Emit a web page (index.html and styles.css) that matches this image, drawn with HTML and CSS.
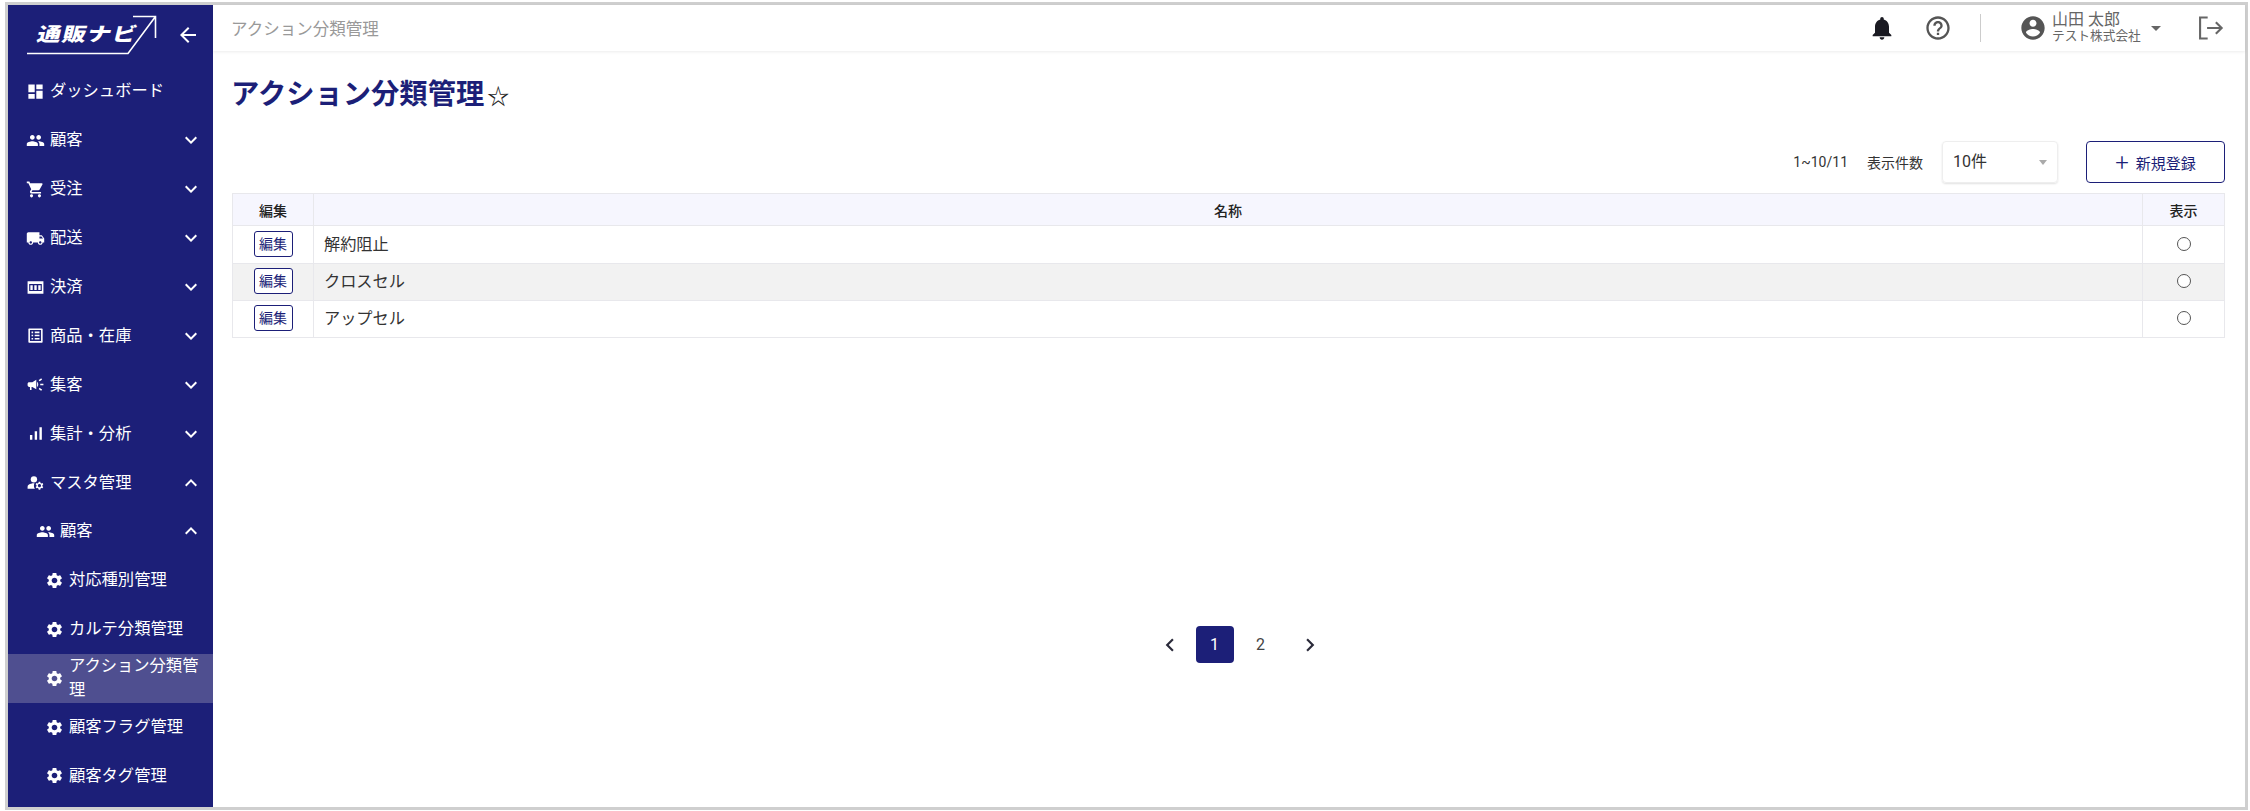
FILE: index.html
```html
<!DOCTYPE html>
<html lang="ja">
<head>
    <meta charset="UTF-8">
    <title>アクション分類管理</title>
    <link rel="stylesheet" href="styles.css">
</head>
<body>
    <svg class="icon-defs" xmlns="http://www.w3.org/2000/svg">
        <symbol id="i-dashboard" viewBox="0 0 24 24"><path d="M3 13h8V3H3v10zm0 8h8v-6H3v6zm10 0h8V11h-8v10zm0-18v6h8V3h-8z"/></symbol>
        <symbol id="i-people" viewBox="0 0 24 24"><path d="M16 11c1.66 0 2.99-1.34 2.99-3S17.66 5 16 5c-1.66 0-3 1.34-3 3s1.34 3 3 3zm-8 0c1.66 0 2.99-1.34 2.99-3S9.66 5 8 5C6.34 5 5 6.34 5 8s1.34 3 3 3zm0 2c-2.33 0-7 1.17-7 3.5V19h14v-2.5c0-2.33-4.67-3.5-7-3.5zm8 0c-.29 0-.62.02-.97.05 1.16.84 1.97 1.97 1.97 3.45V19h6v-2.5c0-2.33-4.67-3.5-7-3.5z"/></symbol>
        <symbol id="i-cart" viewBox="0 0 24 24"><path d="M7 18c-1.1 0-1.99.9-1.99 2S5.9 22 7 22s2-.9 2-2-.9-2-2-2zM1 2v2h2l3.6 7.59-1.35 2.45c-.16.28-.25.61-.25.96 0 1.1.9 2 2 2h12v-2H7.42c-.14 0-.25-.11-.25-.25l.03-.12.9-1.63h7.45c.75 0 1.41-.41 1.75-1.03l3.58-6.49c.08-.14.12-.31.12-.48 0-.55-.45-1-1-1H5.21l-.94-2H1zm16 16c-1.1 0-1.99.9-1.99 2s.89 2 1.99 2 2-.9 2-2-.9-2-2-2z"/></symbol>
        <symbol id="i-truck" viewBox="0 0 24 24"><path d="M20 8h-3V4H3c-1.1 0-2 .9-2 2v11h2c0 1.66 1.34 3 3 3s3-1.34 3-3h6c0 1.66 1.34 3 3 3s3-1.34 3-3h2v-5l-3-4zM6 18.5c-.83 0-1.5-.67-1.5-1.5s.67-1.5 1.5-1.5 1.5.67 1.5 1.5-.67 1.5-1.5 1.5zm13.5-9l1.96 2.5H17V9.5h2.5zm-1.5 9c-.83 0-1.5-.67-1.5-1.5s.67-1.5 1.5-1.5 1.5.67 1.5 1.5-.67 1.5-1.5 1.5z"/></symbol>
        <symbol id="i-card" viewBox="0 0 24 24"><path fill-rule="evenodd" d="M2 4h20v16H2zM4 7.5v9h16v-9zM5.5 9h3v6h-3zm5 0h3v6h-3zm5 0h3v6h-3z"/></symbol>
        <symbol id="i-list" viewBox="0 0 24 24"><path d="M19 5v14H5V5h14m1.1-2H3.9c-.5 0-.9.4-.9.9v16.2c0 .4.4.9.9.9h16.2c.4 0 .9-.5.9-.9V3.9c0-.5-.5-.9-.9-.9zM11 7h6v2h-6V7zm0 4h6v2h-6v-2zm0 4h6v2h-6zM7 7h2v2H7zm0 4h2v2H7zm0 4h2v2H7z"/></symbol>
        <symbol id="i-campaign" viewBox="0 0 24 24"><path d="M18 11v2h4v-2h-4zm-2 6.61c.96.71 2.21 1.65 3.2 2.39.4-.53.8-1.07 1.2-1.6-.99-.74-2.24-1.68-3.2-2.4-.4.54-.8 1.08-1.2 1.61zM20.4 5.6c-.4-.53-.8-1.07-1.2-1.6-.99.74-2.24 1.68-3.2 2.4.4.53.8 1.07 1.2 1.6.96-.72 2.21-1.65 3.2-2.4zM4 9c-1.1 0-2 .9-2 2v2c0 1.1.9 2 2 2h1v4h2v-4h1l5 3V6L8 9H4zm11.5 3c0-1.33-.58-2.53-1.5-3.35v6.69c.92-.81 1.5-2.01 1.5-3.34z"/></symbol>
        <symbol id="i-signal" viewBox="0 0 24 24"><path d="M17 4h3v16h-3zM5 14h3v6H5zm6-5h3v11h-3z"/></symbol>
        <symbol id="i-manage" viewBox="0 0 24 24"><circle cx="10" cy="8" r="4"/><path d="M10.67 13.02C10.45 13.01 10.23 13 10 13c-2.42 0-4.68.67-6.61 1.82C2.51 15.34 2 16.32 2 17.35V20h9.26C10.47 18.87 10 17.49 10 16c0-1.07.25-2.07.67-2.98z"/><path d="M20.75 16c0-.22-.03-.42-.06-.63l1.14-1.01-1-1.73-1.45.49c-.32-.27-.68-.48-1.08-.63L18 11h-2l-.3 1.49c-.4.15-.76.36-1.08.63l-1.45-.49-1 1.73 1.14 1.01c-.03.21-.06.41-.06.63s.03.42.06.63l-1.14 1.01 1 1.73 1.45-.49c.32.27.68.48 1.08.63L16 21h2l.3-1.49c.4-.15.76-.36 1.08-.63l1.45.49 1-1.73-1.14-1.01c.03-.21.06-.41.06-.63zM17 18c-1.1 0-2-.9-2-2s.9-2 2-2 2 .9 2 2-.9 2-2 2z"/></symbol>
        <symbol id="i-gear" viewBox="0 0 24 24"><path d="M19.14 12.94c.04-.3.06-.61.06-.94 0-.32-.02-.64-.07-.94l2.03-1.58c.18-.14.23-.41.12-.61l-1.92-3.32c-.12-.22-.37-.29-.59-.22l-2.39.96c-.5-.38-1.03-.7-1.62-.94l-.36-2.54c-.04-.24-.24-.41-.48-.41h-3.84c-.24 0-.43.17-.47.41l-.36 2.54c-.59.24-1.13.57-1.62.94l-2.39-.96c-.22-.08-.47 0-.59.22L2.74 8.87c-.12.21-.08.47.12.61l2.03 1.58c-.05.3-.09.63-.09.94s.02.64.07.94l-2.03 1.58c-.18.14-.23.41-.12.61l1.92 3.32c.12.22.37.29.59.22l2.39-.96c.5.38 1.03.7 1.62.94l.36 2.54c.05.24.24.41.48.41h3.84c.24 0 .44-.17.47-.41l.36-2.54c.59-.24 1.13-.56 1.62-.94l2.39.96c.22.08.47 0 .59-.22l1.92-3.32c.12-.22.07-.47-.12-.61l-2.01-1.58zM12 15.6c-1.98 0-3.6-1.62-3.6-3.6s1.62-3.6 3.6-3.6 3.6 1.62 3.6 3.6-1.62 3.6-3.6 3.6z"/></symbol>
        <symbol id="i-down" viewBox="0 0 24 24"><path d="M7.41 8.59L12 13.17l4.59-4.58L18 10l-6 6-6-6z"/></symbol>
        <symbol id="i-up" viewBox="0 0 24 24"><path d="M7.41 15.41L12 10.83l4.59 4.58L18 14l-6-6-6 6z"/></symbol>
    </svg>

    <div class="frame">
        <!-- サイドバー -->
        <aside class="sidebar">
            <div class="brand">
                <div class="logo">
                    <svg class="logo-line" viewBox="0 0 132 40" fill="none" stroke="#fff" stroke-width="1.6">
                        <path d="M1 38.5H102L129.5 1.5M107 1.5H129.5V23"/>
                    </svg>
                    <span class="logo-text">通販ナビ</span>
                </div>
                <svg class="back-icon" viewBox="0 0 24 24" fill="#fff"><path d="M20 11H7.83l5.59-5.59L12 4l-8 8 8 8 1.41-1.41L7.83 13H20v-2z"/></svg>
            </div>
            <nav>
                <a class="nav-item"><svg class="nav-icon"><use href="#i-dashboard"/></svg><span class="nav-label">ダッシュボード</span></a>
                <a class="nav-item"><svg class="nav-icon"><use href="#i-people"/></svg><span class="nav-label">顧客</span><svg class="chevron"><use href="#i-down"/></svg></a>
                <a class="nav-item"><svg class="nav-icon"><use href="#i-cart"/></svg><span class="nav-label">受注</span><svg class="chevron"><use href="#i-down"/></svg></a>
                <a class="nav-item"><svg class="nav-icon"><use href="#i-truck"/></svg><span class="nav-label">配送</span><svg class="chevron"><use href="#i-down"/></svg></a>
                <a class="nav-item"><svg class="nav-icon"><use href="#i-card"/></svg><span class="nav-label">決済</span><svg class="chevron"><use href="#i-down"/></svg></a>
                <a class="nav-item"><svg class="nav-icon"><use href="#i-list"/></svg><span class="nav-label">商品・在庫</span><svg class="chevron"><use href="#i-down"/></svg></a>
                <a class="nav-item"><svg class="nav-icon"><use href="#i-campaign"/></svg><span class="nav-label">集客</span><svg class="chevron"><use href="#i-down"/></svg></a>
                <a class="nav-item"><svg class="nav-icon"><use href="#i-signal"/></svg><span class="nav-label">集計・分析</span><svg class="chevron"><use href="#i-down"/></svg></a>
                <a class="nav-item"><svg class="nav-icon"><use href="#i-manage"/></svg><span class="nav-label">マスタ管理</span><svg class="chevron"><use href="#i-up"/></svg></a>
                <a class="nav-item level-2"><svg class="nav-icon"><use href="#i-people"/></svg><span class="nav-label">顧客</span><svg class="chevron"><use href="#i-up"/></svg></a>
                <a class="nav-item level-3"><svg class="nav-icon"><use href="#i-gear"/></svg><span class="nav-label">対応種別管理</span></a>
                <a class="nav-item level-3"><svg class="nav-icon"><use href="#i-gear"/></svg><span class="nav-label">カルテ分類管理</span></a>
                <a class="nav-item level-3 active"><svg class="nav-icon"><use href="#i-gear"/></svg><span class="nav-label">アクション分類管理</span></a>
                <a class="nav-item level-3"><svg class="nav-icon"><use href="#i-gear"/></svg><span class="nav-label">顧客フラグ管理</span></a>
                <a class="nav-item level-3"><svg class="nav-icon"><use href="#i-gear"/></svg><span class="nav-label">顧客タグ管理</span></a>
            </nav>
        </aside>

        <div class="main">
            <!-- ヘッダー -->
            <header class="topbar">
                <div class="crumb">アクション分類管理</div>
                <svg class="top-icon bell" viewBox="0 0 24 24"><path d="M12 22c1.1 0 2-.9 2-2h-4c0 1.1.89 2 2 2zm6-6v-5c0-3.07-1.64-5.64-4.5-6.32V4c0-.83-.67-1.5-1.5-1.5s-1.5.67-1.5 1.5v.68C7.63 5.36 6 7.92 6 11v5l-2 2v1h16v-1l-2-2z"/></svg>
                <svg class="top-icon help" viewBox="0 0 24 24"><path d="M11 18h2v-2h-2v2zm1-16C6.48 2 2 6.48 2 12s4.48 10 10 10 10-4.48 10-10S17.52 2 12 2zm0 18c-4.41 0-8-3.59-8-8s3.59-8 8-8 8 3.59 8 8-3.59 8-8 8zm0-14c-2.21 0-4 1.79-4 4h2c0-1.1.9-2 2-2s2 .9 2 2c0 2-3 1.75-3 5h2c0-2.25 3-2.5 3-5 0-2.21-1.79-4-4-4z"/></svg>
                <div class="top-divider"></div>
                <svg class="avatar" viewBox="0 0 24 24"><path d="M12 2C6.48 2 2 6.48 2 12s4.48 10 10 10 10-4.48 10-10S17.52 2 12 2zm0 3c1.66 0 3 1.34 3 3s-1.34 3-3 3-3-1.34-3-3 1.34-3 3-3zm0 14.2c-2.5 0-4.71-1.28-6-3.22.03-1.99 4-3.08 6-3.08 1.99 0 5.97 1.09 6 3.08-1.29 1.94-3.5 3.22-6 3.22z"/></svg>
                <div class="user">
                    <div class="user-name">山田 太郎</div>
                    <div class="user-company">テスト株式会社</div>
                </div>
                <span class="user-caret"></span>
                <svg class="logout" viewBox="0 0 24 24" fill="none" stroke="#666" stroke-width="1.8"><path d="M10 3H3.5v18H10M9.5 12H22M17 7l5 5-5 5"/></svg>
            </header>

            <main class="content">
                <h1 class="page-title">アクション分類管理<span class="star">☆</span></h1>

                <div class="toolbar">
                    <span class="count">1~10/11</span>
                    <span class="per-page">表示件数</span>
                    <div class="select">10件<span class="select-caret"></span></div>
                    <button class="new-btn"><span class="plus">+</span>新規登録</button>
                </div>

                <table class="list">
                    <thead>
                        <tr>
                            <th class="col-edit">編集</th>
                            <th>名称</th>
                            <th class="col-show">表示</th>
                        </tr>
                    </thead>
                    <tbody>
                        <tr>
                            <td class="cell-center"><button class="edit-btn">編集</button></td>
                            <td>解約阻止</td>
                            <td class="cell-center"><input class="radio" type="radio"></td>
                        </tr>
                        <tr>
                            <td class="cell-center"><button class="edit-btn">編集</button></td>
                            <td>クロスセル</td>
                            <td class="cell-center"><input class="radio" type="radio"></td>
                        </tr>
                        <tr>
                            <td class="cell-center"><button class="edit-btn">編集</button></td>
                            <td>アップセル</td>
                            <td class="cell-center"><input class="radio" type="radio"></td>
                        </tr>
                    </tbody>
                </table>

                <div class="pager">
                    <svg class="pager-arrow" viewBox="0 0 24 24"><path d="M15.41 7.41L14 6l-6 6 6 6 1.41-1.41L10.83 12z"/></svg>
                    <span class="page current">1</span>
                    <span class="page">2</span>
                    <svg class="pager-arrow" viewBox="0 0 24 24"><path d="M10 6L8.59 7.41 13.17 12l-4.58 4.59L10 18l6-6z"/></svg>
                </div>
            </main>
        </div>
    </div>
</body>
</html>
```

FILE: styles.css
```css
* {
    margin: 0;
    padding: 0;
    box-sizing: border-box;
}

html, body {
    height: 811px;
    overflow: hidden;
}

body {
    font-family: 'Roboto', 'Noto Sans CJK JP', sans-serif;
    background: white;
    color: #333;
    padding: 2px 2px 1px 5px;
}

.icon-defs {
    display: none;
}

.frame {
    display: flex;
    height: 100%;
    border: 3px solid #cfcfcf;
}

/* sidebar */
.sidebar {
    width: 205px;
    flex-shrink: 0;
    background: #1c1f78;
    color: white;
    overflow: hidden;
}

.brand {
    height: 62px;
    display: flex;
    align-items: flex-start;
    padding: 10px 0 0 18px;
}

.logo {
    position: relative;
    width: 132px;
    height: 40px;
}

.logo-line {
    display: block;
    width: 132px;
    height: 40px;
}

.logo-text {
    position: absolute;
    left: 9px;
    top: 10px;
    font-size: 19px;
    line-height: 20px;
    font-weight: 900;
    letter-spacing: 1px;
    white-space: nowrap;
    transform: skewX(-14deg) scaleX(1.25);
    transform-origin: left bottom;
}

.back-icon {
    width: 24px;
    height: 24px;
    margin: 8px 0 0 18px;
}

.nav-item {
    display: flex;
    align-items: center;
    height: 48.9px;
    padding: 0 10px 0 18px;
    font-size: 16.3px;
    line-height: 24px;
}

.nav-icon {
    width: 19px;
    height: 19px;
    fill: white;
    flex-shrink: 0;
    margin-right: 5px;
}

.nav-label {
    flex: 1;
}

.chevron {
    width: 24px;
    height: 24px;
    fill: white;
    flex-shrink: 0;
}

.level-2 {
    padding-left: 28px;
}

.level-3 {
    padding-left: 37px;
}

.active {
    background: #4f4f90;
}

/* header */
.main {
    flex: 1;
    min-width: 0;
    display: flex;
    flex-direction: column;
}

.topbar {
    height: 46px;
    flex-shrink: 0;
    display: flex;
    align-items: center;
    padding: 0 21px 0 18px;
    box-shadow: 0 1px 3px rgba(0,0,0,0.08);
}

.crumb {
    flex: 1;
    font-size: 16.5px;
    color: #999;
}

.top-icon {
    width: 28px;
    height: 28px;
}

.bell {
    fill: #1a1a22;
}

.help {
    fill: #555;
    margin-left: 28px;
}

.top-divider {
    width: 1px;
    height: 28px;
    background: #ccc;
    margin: 0 38px 0 28px;
}

.avatar {
    width: 28px;
    height: 28px;
    fill: #555;
}

.user {
    width: 89px;
    margin: -2px 0 0 5px;
    color: #666;
    white-space: nowrap;
}

.user-name {
    font-size: 16px;
    line-height: 17px;
}

.user-company {
    font-size: 12.7px;
    line-height: 16px;
}

.user-caret {
    width: 0;
    height: 0;
    border-left: 5px solid transparent;
    border-right: 5px solid transparent;
    border-top: 5px solid #666;
    margin-left: 10px;
}

.logout {
    width: 28px;
    height: 28px;
    margin-left: 35px;
}

/* content */
.content {
    flex: 1;
    padding: 0 20px 0 19px;
}

.page-title {
    height: 40px;
    font-size: 28.3px;
    line-height: 40px;
    font-weight: 700;
    color: #1c1f78;
    margin: 24px 0 0 -1px;
}

.star {
    font-weight: 400;
    color: #222;
    font-size: 22px;
    margin-left: 3px;
}

.toolbar {
    display: flex;
    align-items: center;
    justify-content: flex-end;
    height: 42px;
    margin-top: 26px;
    font-size: 14px;
}

.per-page {
    margin-left: 19px;
}

.select {
    position: relative;
    width: 116px;
    height: 42px;
    margin-left: 19px;
    padding-left: 10px;
    font-size: 16px;
    line-height: 40px;
    border: 1px solid #eee;
    border-radius: 4px;
    box-shadow: 0 1px 2px rgba(0,0,0,0.12);
}

.select-caret {
    position: absolute;
    right: 10px;
    top: 18px;
    width: 0;
    height: 0;
    border-left: 4px solid transparent;
    border-right: 4px solid transparent;
    border-top: 5px solid #aaa;
}

.new-btn {
    width: 139px;
    height: 42px;
    margin-left: 28px;
    background: white;
    color: #1c1f78;
    border: 1px solid #1c1f78;
    border-radius: 4px;
    font-family: inherit;
    font-size: 15px;
}

.plus {
    font-size: 24px;
    line-height: 20px;
    font-weight: 300;
    margin-right: 7px;
    vertical-align: -2px;
}

.list {
    width: 100%;
    margin-top: 10px;
    border-collapse: collapse;
    table-layout: fixed;
    font-size: 16.2px;
}

.list th, .list td {
    border: 1px solid #e8e8ec;
}

.list th {
    height: 32px;
    background: #f6f6fe;
    font-size: 14px;
    font-weight: 500;
    color: #222;
}

.list td {
    height: 37px;
    padding: 0 10px 4px;
}

.list tbody tr:first-child td {
    height: 38px;
}

.col-edit {
    width: 81px;
}

.col-show {
    width: 82px;
}

.list tbody tr:nth-child(2) {
    background: #f2f2f2;
}

.list td.cell-center {
    text-align: center;
    padding: 0 0 2px;
}

.edit-btn {
    display: block;
    width: 39px;
    height: 26px;
    margin: 0 auto;
    background: white;
    color: #1c1f78;
    border: 1px solid #1c1f78;
    border-radius: 3px;
    font-family: inherit;
    font-size: 14px;
    line-height: 22px;
}

.radio {
    appearance: none;
    display: block;
    width: 14px;
    height: 14px;
    margin: 0 auto;
    border: 1px solid #555;
    border-radius: 50%;
    background: white;
}

.pager {
    display: flex;
    align-items: center;
    justify-content: center;
    margin-top: 288px;
    padding-left: 22px;
    font-size: 16px;
    color: #444;
}

.pager-arrow {
    width: 26px;
    height: 26px;
    fill: #2a2a3a;
}

.page {
    width: 38px;
    height: 37px;
    margin-left: 8px;
    text-align: center;
    line-height: 37px;
}

.page.current {
    background: #1c1f78;
    color: white;
    border-radius: 4px;
    margin-left: 13px;
}

.page + .pager-arrow {
    margin-left: 17px;
}
```
